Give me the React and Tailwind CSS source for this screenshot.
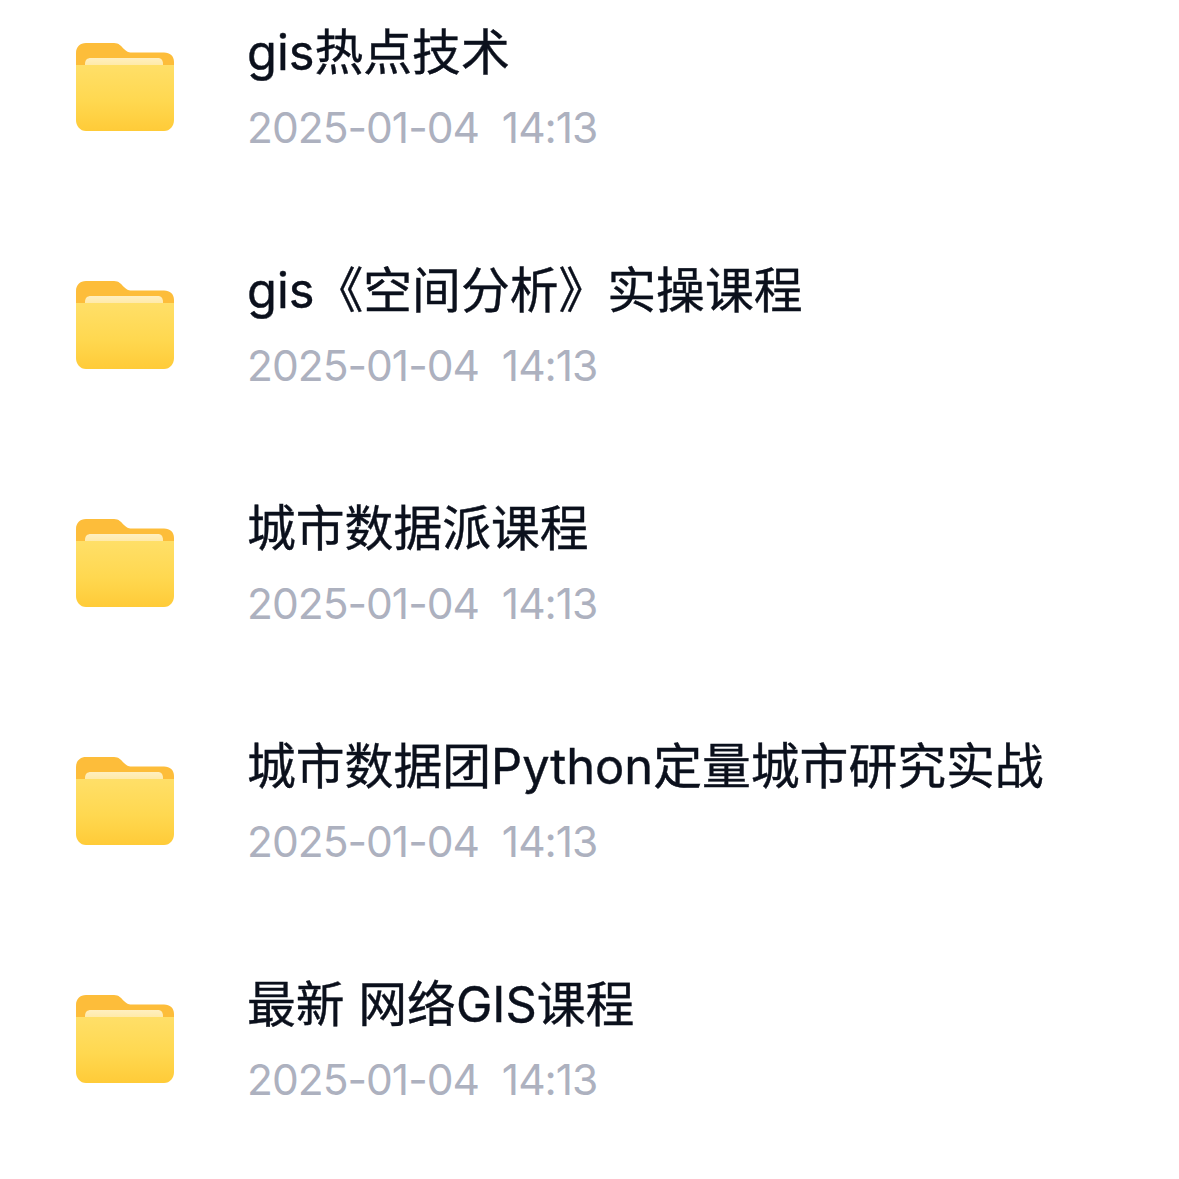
import React from 'react';

const folders = [
  { name: 'gis热点技术', time: '2025-01-04  14:13' },
  { name: 'gis《空间分析》实操课程', time: '2025-01-04  14:13' },
  { name: '城市数据派课程', time: '2025-01-04  14:13' },
  { name: '城市数据团Python定量城市研究实战', time: '2025-01-04  14:13' },
  { name: '最新 网络GIS课程', time: '2025-01-04  14:13' },
];

const FolderIcon = ({ id }) => (
  <svg width="98" height="88" viewBox="0 0 98 88" className="shrink-0">
    <defs>
      <linearGradient id={`front-${id}`} x1="0" y1="0" x2="0" y2="1">
        <stop offset="0" stopColor="#ffdf68" />
        <stop offset="0.55" stopColor="#ffd850" />
        <stop offset="1" stopColor="#ffcb38" />
      </linearGradient>
      <linearGradient id={`paper-${id}`} x1="0" y1="0" x2="0" y2="1">
        <stop offset="0" stopColor="#ffefc0" />
        <stop offset="1" stopColor="#ffe590" />
      </linearGradient>
    </defs>
    {/* back tab */}
    <path
      d="M10 0H38C43 0 45 3 48 6C51 9 53 9.5 57 9.5H88C94 9.5 98 13 98 19V40H0V10C0 4 4 0 10 0Z"
      fill="#fdbd3a"
    />
    {/* paper */}
    <path d="M9 21C9 17 11 15 15 15H82C85 15 87 17 87 21V30H9Z" fill={`url(#paper-${id})`} />
    {/* front */}
    <path
      d="M0 22H98V77C98 83 94 88 88 88H10C4 88 0 83 0 77Z"
      fill={`url(#front-${id})`}
    />
  </svg>
);

const FolderRow = ({ id, name, time }) => (
  <div className="flex items-start h-[238px] pl-[76px]">
    <div className="mt-[43px]">
      <FolderIcon id={id} />
    </div>
    <div className="ml-[73px] pt-[22px]">
      <div className="text-[48.8px] leading-[62px] [-webkit-text-stroke:0.4px_#0b101c] text-[#0b101c] whitespace-nowrap font-['Inter','Noto_Sans_CJK_SC',sans-serif]">
        {name}
      </div>
      <div className="mt-[16px] text-[42.5px] leading-[56px] tracking-[-1px] [word-spacing:0.5px] text-[#adb1bf] whitespace-pre font-['Inter',sans-serif]">
        {time}
      </div>
    </div>
  </div>
);

const App = () => (
  <div className="w-[1179px] h-[1179px] overflow-hidden bg-white">
    {folders.map((f, i) => (
      <FolderRow key={i} id={i} name={f.name} time={f.time} />
    ))}
  </div>
);

export default App;
